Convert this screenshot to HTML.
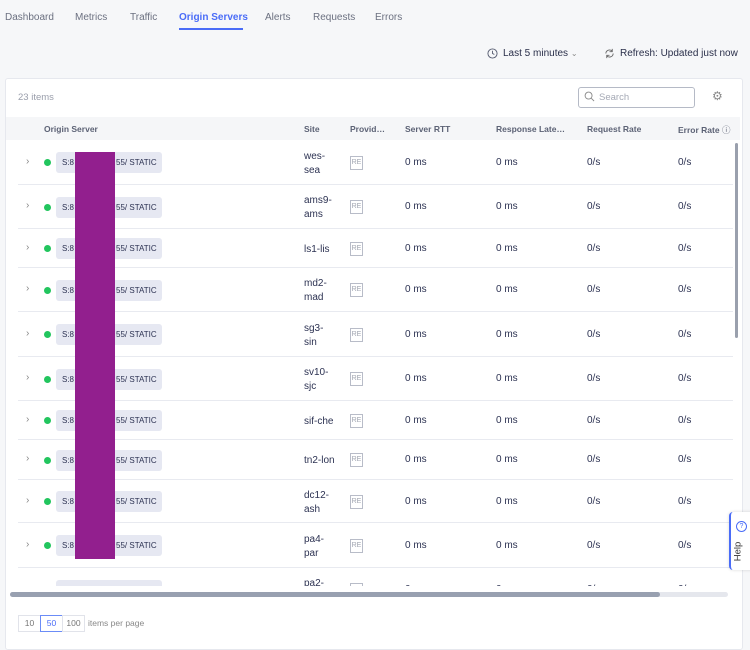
<!DOCTYPE html><html><head><style>
body{margin:0;width:750px;height:635px;background:#f6f7f9;font-family:"Liberation Sans",sans-serif;position:relative;overflow:hidden;color:#2a2f4a}
.a{position:absolute;white-space:nowrap}
.tab{top:12px;font-size:10px;color:#6b7080}
.card{left:5px;top:78px;width:736px;height:570px;background:#fff;border:1px solid #e6e8ee;border-radius:3px}
.hd{font-size:8.5px;font-weight:bold;color:#5c6275}
.row{position:absolute;left:18px;width:715px;border-bottom:1px solid #e8eaf0}
.c{font-size:10px;color:#2c3252}
.chip{position:absolute;left:56px;width:106px;height:21px;background:#e6e8f2;border-radius:3px;font-size:8px;color:#2c3252;line-height:21px}
.dot{position:absolute;left:44px;width:7px;height:7px;border-radius:50%;background:#22c55e}
.re{position:absolute;left:350px;width:11px;height:12px;border:1px solid #b8bcc8;font-size:7px;color:#a0a4b0;line-height:12px;text-align:center}
</style></head><body>
<div class="a tab" style="left:5px">Dashboard</div>
<div class="a tab" style="left:75px">Metrics</div>
<div class="a tab" style="left:130px">Traffic</div>
<div class="a tab" style="left:179px;color:#4a6cf7;font-weight:bold">Origin Servers</div>
<div class="a" style="left:179px;top:28px;width:64px;height:2px;background:#4a6cf7"></div>
<div class="a tab" style="left:265px">Alerts</div>
<div class="a tab" style="left:313px">Requests</div>
<div class="a tab" style="left:375px">Errors</div>
<svg class="a" style="left:487px;top:48px" width="11" height="11" viewBox="0 0 12 12"><circle cx="6" cy="6" r="5" fill="none" stroke="#555b70"/><path d="M6 3v3l2 1" fill="none" stroke="#555b70"/></svg>
<div class="a" style="left:503px;top:48px;font-size:10px">Last 5 minutes <span style="color:#888;font-size:8px">&#8964;</span></div>
<svg class="a" style="left:604px;top:48px" width="11" height="11" viewBox="0 0 12 12"><path d="M2 6a4 4 0 0 1 7-2.5M10 6a4 4 0 0 1-7 2.5M9 1v3H6M3 11V8h3" fill="none" stroke="#666"/></svg>
<div class="a" style="left:620px;top:48px;font-size:10px">Refresh: Updated just now</div>
<div class="a card"></div>
<div class="a" style="left:18px;top:92px;font-size:9.5px;color:#9a9eab">23 items</div>
<div class="a" style="left:578px;top:87px;width:115px;height:19px;border:1px solid #b5bac6;border-radius:3px"></div>
<svg class="a" style="left:584px;top:91px" width="11" height="11" viewBox="0 0 12 12"><circle cx="5" cy="5" r="3.8" fill="none" stroke="#888"/><path d="M8 8l3 3" stroke="#888"/></svg>
<div class="a" style="left:599px;top:92px;font-size:9.5px;color:#a5a9b5">Search</div>
<div class="a" style="left:712px;top:89px;font-size:12px;color:#888">&#9881;</div>
<div class="a" style="left:6px;top:117px;width:734px;height:23px;background:#f5f6f8"></div>
<div class="a hd" style="left:44px;top:124px">Origin Server</div>
<div class="a hd" style="left:304px;top:124px">Site</div>
<div class="a hd" style="left:350px;top:124px">Provid…</div>
<div class="a hd" style="left:405px;top:124px">Server RTT</div>
<div class="a hd" style="left:496px;top:124px">Response Late…</div>
<div class="a hd" style="left:587px;top:124px">Request Rate</div>
<div class="a hd" style="left:678px;top:124px">Error Rate <span style="font-weight:normal">&#9432;</span></div>
<div class="a" style="left:6px;top:140px;width:734px;height:446px;overflow:hidden">
<div style="position:relative;left:-6px;top:-140px">
<script>
var r=[[140,45,"wes-<br>sea"],[185,44,"ams9-<br>ams"],[229,39,"ls1-lis"],[268,44,"md2-<br>mad"],[312,45,"sg3-<br>sin"],[357,44,"sv10-<br>sjc"],[401,39,"sif-che"],[440,40,"tn2-lon"],[480,43,"dc12-<br>ash"],[523,45,"pa4-<br>par"],[568,44,"pa2-<br>…"]];
var h="";r.forEach(function(x){var t=x[0],c=t+x[1]/2;var two=x[2].indexOf("<br>")>0;
h+='<div class="row" style="top:'+t+'px;height:'+(x[1]-1)+'px"></div>';
h+='<div class="a" style="left:26px;top:'+(c-7)+'px;font-size:10px;color:#888">&#8250;</div>';
h+='<div class="dot" style="top:'+(c-3.5)+'px"></div>';
h+='<div class="chip" style="top:'+(c-10.5)+'px"><span style="margin-left:6px">S:8</span><span style="margin-left:42px">55/ STATIC</span></div>';
h+='<div class="a c" style="left:304px;top:'+(c-(two?13:6))+'px;line-height:14px">'+x[2]+'</div>';
h+='<div class="re" style="top:'+(c-7)+'px">RE</div>';
[405,496].forEach(function(l){h+='<div class="a c" style="left:'+l+'px;top:'+(c-6)+'px">0 ms</div>'});
[587,678].forEach(function(l){h+='<div class="a c" style="left:'+l+'px;top:'+(c-6)+'px">0/s</div>'});});
document.write(h);
</script>
</div></div>
<div class="a" style="left:735px;top:143px;width:3px;height:195px;background:#9aa0ad;border-radius:2px"></div>
<div class="a" style="left:75px;top:152px;width:40px;height:407px;background:#921f8e"></div>
<div class="a" style="left:10px;top:592px;width:718px;height:5px;background:#e5e7ed;border-radius:3px"></div>
<div class="a" style="left:10px;top:592px;width:650px;height:5px;background:#98a0b0;border-radius:3px"></div>
<div class="a" style="left:18px;top:615px;width:21px;height:15px;border:1px solid #e1e3ea;font-size:8.5px;color:#777;text-align:center;line-height:15px">10</div>
<div class="a" style="left:40px;top:615px;width:21px;height:15px;border:1px solid #6b8cf7;font-size:8.5px;color:#4a6cf7;text-align:center;line-height:15px">50</div>
<div class="a" style="left:62px;top:615px;width:21px;height:15px;border:1px solid #e1e3ea;font-size:8.5px;color:#777;text-align:center;line-height:15px">100</div>
<div class="a" style="left:88px;top:618px;font-size:8.5px;color:#888">items per page</div>
<div class="a" style="left:729px;top:512px;width:24px;height:58px;background:#fff;border-left:2px solid #4a6cf7;border-radius:4px 0 0 4px;box-shadow:0 0 3px rgba(0,0,0,.15)"></div>
<div class="a" style="left:736px;top:521px;width:9px;height:9px;border:1px solid #4a6cf7;border-radius:50%;font-size:7px;color:#4a6cf7;text-align:center;line-height:9px">?</div>
<div class="a" style="left:728px;top:546px;font-size:9.5px;transform:rotate(-90deg);color:#333">Help</div>
</body></html>
